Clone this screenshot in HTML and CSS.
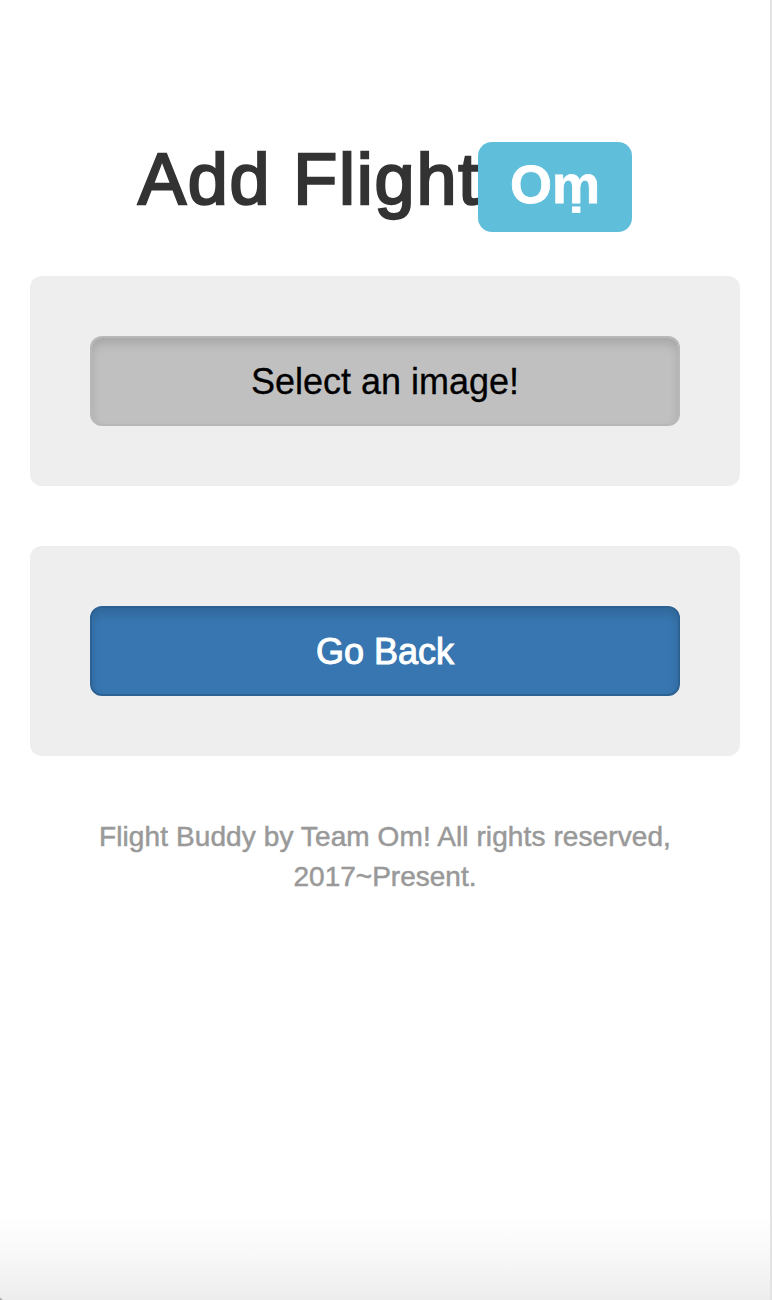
FILE: index.html
```
<!DOCTYPE html>
<html lang="en">
<head>
<meta charset="utf-8">
<title>Flight Buddy</title>
<link rel="stylesheet" href="styles.css">
</head>
<body>
<main class="page">
<h1 class="title"><span class="title-text">Add Flight</span><span class="badge"><span class="badge-text">Oṃ</span></span></h1>
<section class="panel"><button class="btn btn-select"><span class="select-text">Select an image!</span></button></section>
<section class="panel"><button class="btn btn-back"><span class="back-text">Go Back</span></button></section>
<footer class="footer"><p class="line line-one">Flight Buddy by Team Om! All rights reserved,</p><p class="line line-two">2017~Present.</p></footer>
</main>
</body>
</html>
```
FILE: styles.css
```
* { box-sizing: border-box; }
body {
  margin: 0;
  font-family: "Liberation Sans", Arial, sans-serif;
  background: #fff;
}
.page {
  height: 1300px;
  padding: 142px 30px 0;
  border-right: 2px solid #e3e3e3;
  background:
    radial-gradient(circle at 0 100%, #888 0, transparent 3px),
    linear-gradient(to bottom, #fff 1215px, #f8f8f8 1255px, #ededed 1300px);
}
.title {
  display: flex;
  justify-content: center;
  height: 90px;
  margin: 0 0 44px;
  font-size: 72px;
  font-weight: 400;
  line-height: 74px;
  color: #333;
}
.title-text {
  margin-right: -2px;
  letter-spacing: 1.8px;
  white-space: nowrap;
  -webkit-text-stroke: 2.4px #333;
}
.badge {
  width: 154px;
  height: 90px;
  border-radius: 14px;
  background: #5fbeda;
  color: #fff;
  font-size: 54px;
  font-weight: 700;
  line-height: 85px;
  text-align: center;
}
.badge-text { -webkit-text-stroke: .8px #fff; }
.panel {
  height: 210px;
  margin-bottom: 60px;
  padding: 60px;
  border-radius: 12px;
  background: #eee;
}
.btn {
  display: block;
  width: 100%;
  height: 90px;
  padding: 1px 0 0;
  border-radius: 12px;
  font: 36px/85px "Liberation Sans", Arial, sans-serif;
  box-shadow: inset 0 6px 10px rgba(0, 0, 0, .125);
}
.btn-select { border: 2px solid #b8b8b8; background: #c0c0c0; color: #000; -webkit-text-stroke: .3px #000; }
.btn-back { border: 2px solid #2b6293; background: #3776b0; color: #fff; -webkit-text-stroke: 1px #fff; }
.footer { padding-top: 1px; color: #999; font-size: 28px; line-height: 40px; text-align: center; }
.line { margin: 0; white-space: nowrap; -webkit-text-stroke: .5px #999; }
.line-one { letter-spacing: .1px; }
```
